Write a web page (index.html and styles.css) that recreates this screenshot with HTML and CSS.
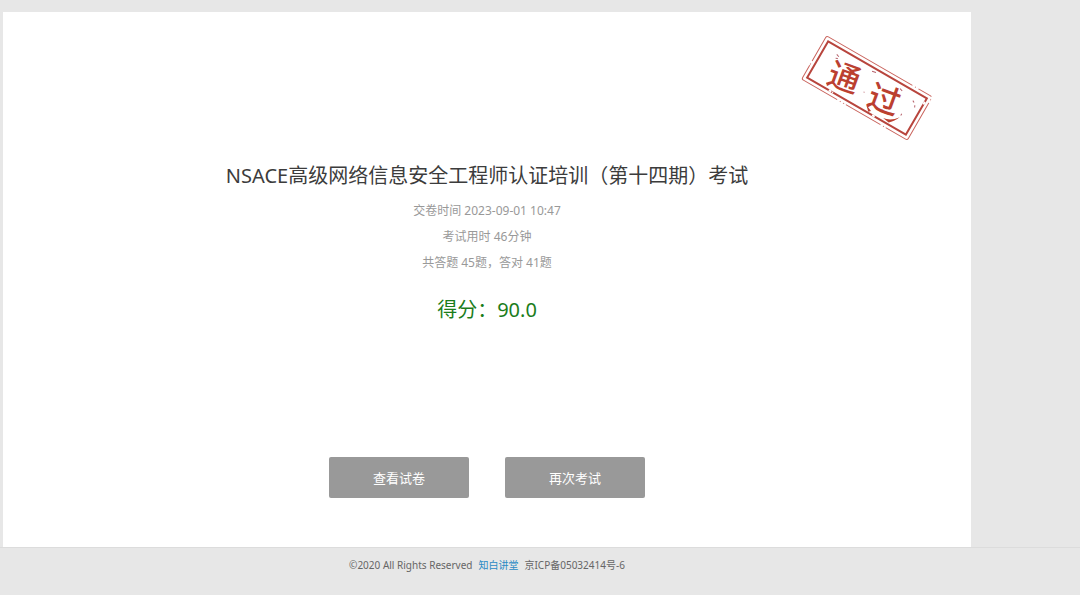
FILE: index.html
```html
<!DOCTYPE html>
<html lang="zh-CN">
<head>
<meta charset="utf-8">
<meta name="viewport" content="width=device-width, initial-scale=1">
<title>考试结果</title>
<link rel="stylesheet" href="styles.css">
</head>
<body>
<main class="result">
  <svg class="stamp" viewBox="-70 -56 140 112" role="img" aria-label="通过">
    <g transform="rotate(30)">
      <rect class="stamp-outer" x="-61" y="-25" width="122" height="50" rx="2"/>
      <rect class="stamp-inner" x="-57" y="-21" width="114" height="42"/>
      <path class="stamp-wear" d="M-32 21h5M18 21h4M38 -25h7M57 -17v3M-61 4v5M-20 25h10M61 -25v7M30 25h6"/>
      <path class="stamp-stroke" d="M29 18Q37 17 43 9Q40 16 36 19ZM8 15l7 3l-2 2Z"/>
      <path class="stamp-specks" d="M-43 -14l3 1M-42 -10l2 -1M-4 -17l4 -1M29 -16l3 1M46 -12l2 1M50 -9l1 2M-1 5h1M43 5v2M-38 16h2"/>
    </g>
    <text class="stamp-text" transform="translate(-23 -10) rotate(20)" y="11">通</text>
    <text class="stamp-text" transform="translate(17 12) rotate(20)" y="11">过</text>
  </svg>
  <h1 class="title">NSACE高级网络信息安全工程师认证培训（第十四期）考试</h1>
  <p class="detail">交卷时间 2023-09-01 10:47</p>
  <p class="detail">考试用时 46分钟</p>
  <p class="detail">共答题 45题，答对 41题</p>
  <p class="score">得分：90.0</p>
  <div class="actions">
    <button class="action" type="button">查看试卷</button>
    <button class="action" type="button">再次考试</button>
  </div>
</main>
<footer class="footer">
  <span>©2020 All Rights Reserved</span>
  <a class="footer-link" href="#">知白讲堂</a>
  <span>京ICP备05032414号-6</span>
</footer>
</body>
</html>
```
FILE: styles.css
```css
* {
  box-sizing: border-box;
}

body {
  margin: 0;
  padding-top: 12px;
  background: #e7e7e7;
  color: #3c3c3c;
  font-family: "Noto Sans", "Noto Sans CJK SC", sans-serif;
}

.result {
  position: relative;
  margin: 0 109px 0 3px;
  padding: 149px 24px 49px;
  background: #fff;
  text-align: center;
}

.stamp {
  position: absolute;
  top: 20px;
  right: 34px;
  width: 140px;
  height: 112px;
}

.stamp-outer,
.stamp-inner {
  fill: none;
  stroke: #c9635c;
  stroke-width: 1;
}

.stamp-inner {
  stroke: #b8453d;
  stroke-width: 2;
}

.stamp-wear {
  fill: none;
  stroke: #fff;
  stroke-width: 2;
  stroke-dasharray: 3 1;
}

.stamp-text {
  fill: #bb4030;
  font-family: "Noto Sans CJK SC", sans-serif;
  font-size: 32px;
  font-weight: 500;
  text-anchor: middle;
}

.stamp-stroke {
  fill: #bb4030;
}

.stamp-specks {
  fill: none;
  stroke: #b5606a;
  stroke-width: 1;
}

.title {
  margin: 0 0 7px;
  font-size: 20px;
  font-weight: 400;
  line-height: 30px;
}

.detail {
  margin: 0;
  color: #999;
  font-size: 12px;
  line-height: 26px;
}

.score {
  margin: 19px 0 0;
  color: #1b7d1b;
  font-size: 20px;
  line-height: 30px;
}

.actions {
  display: flex;
  justify-content: center;
  gap: 36px;
  margin-top: 132px;
}

.action {
  width: 140px;
  height: 41px;
  padding: 0;
  border: 0;
  border-radius: 2px;
  background: #999;
  color: #fff;
  font-family: inherit;
  font-size: 13px;
}

.footer {
  display: flex;
  justify-content: center;
  gap: 6px;
  padding: 7px 109px 20px 3px;
  border-top: 1px solid #dcdcdc;
  color: #666;
  font-size: 10px;
  line-height: 20px;
}

.footer-link {
  color: #2a8ac4;
  text-decoration: none;
}
```
